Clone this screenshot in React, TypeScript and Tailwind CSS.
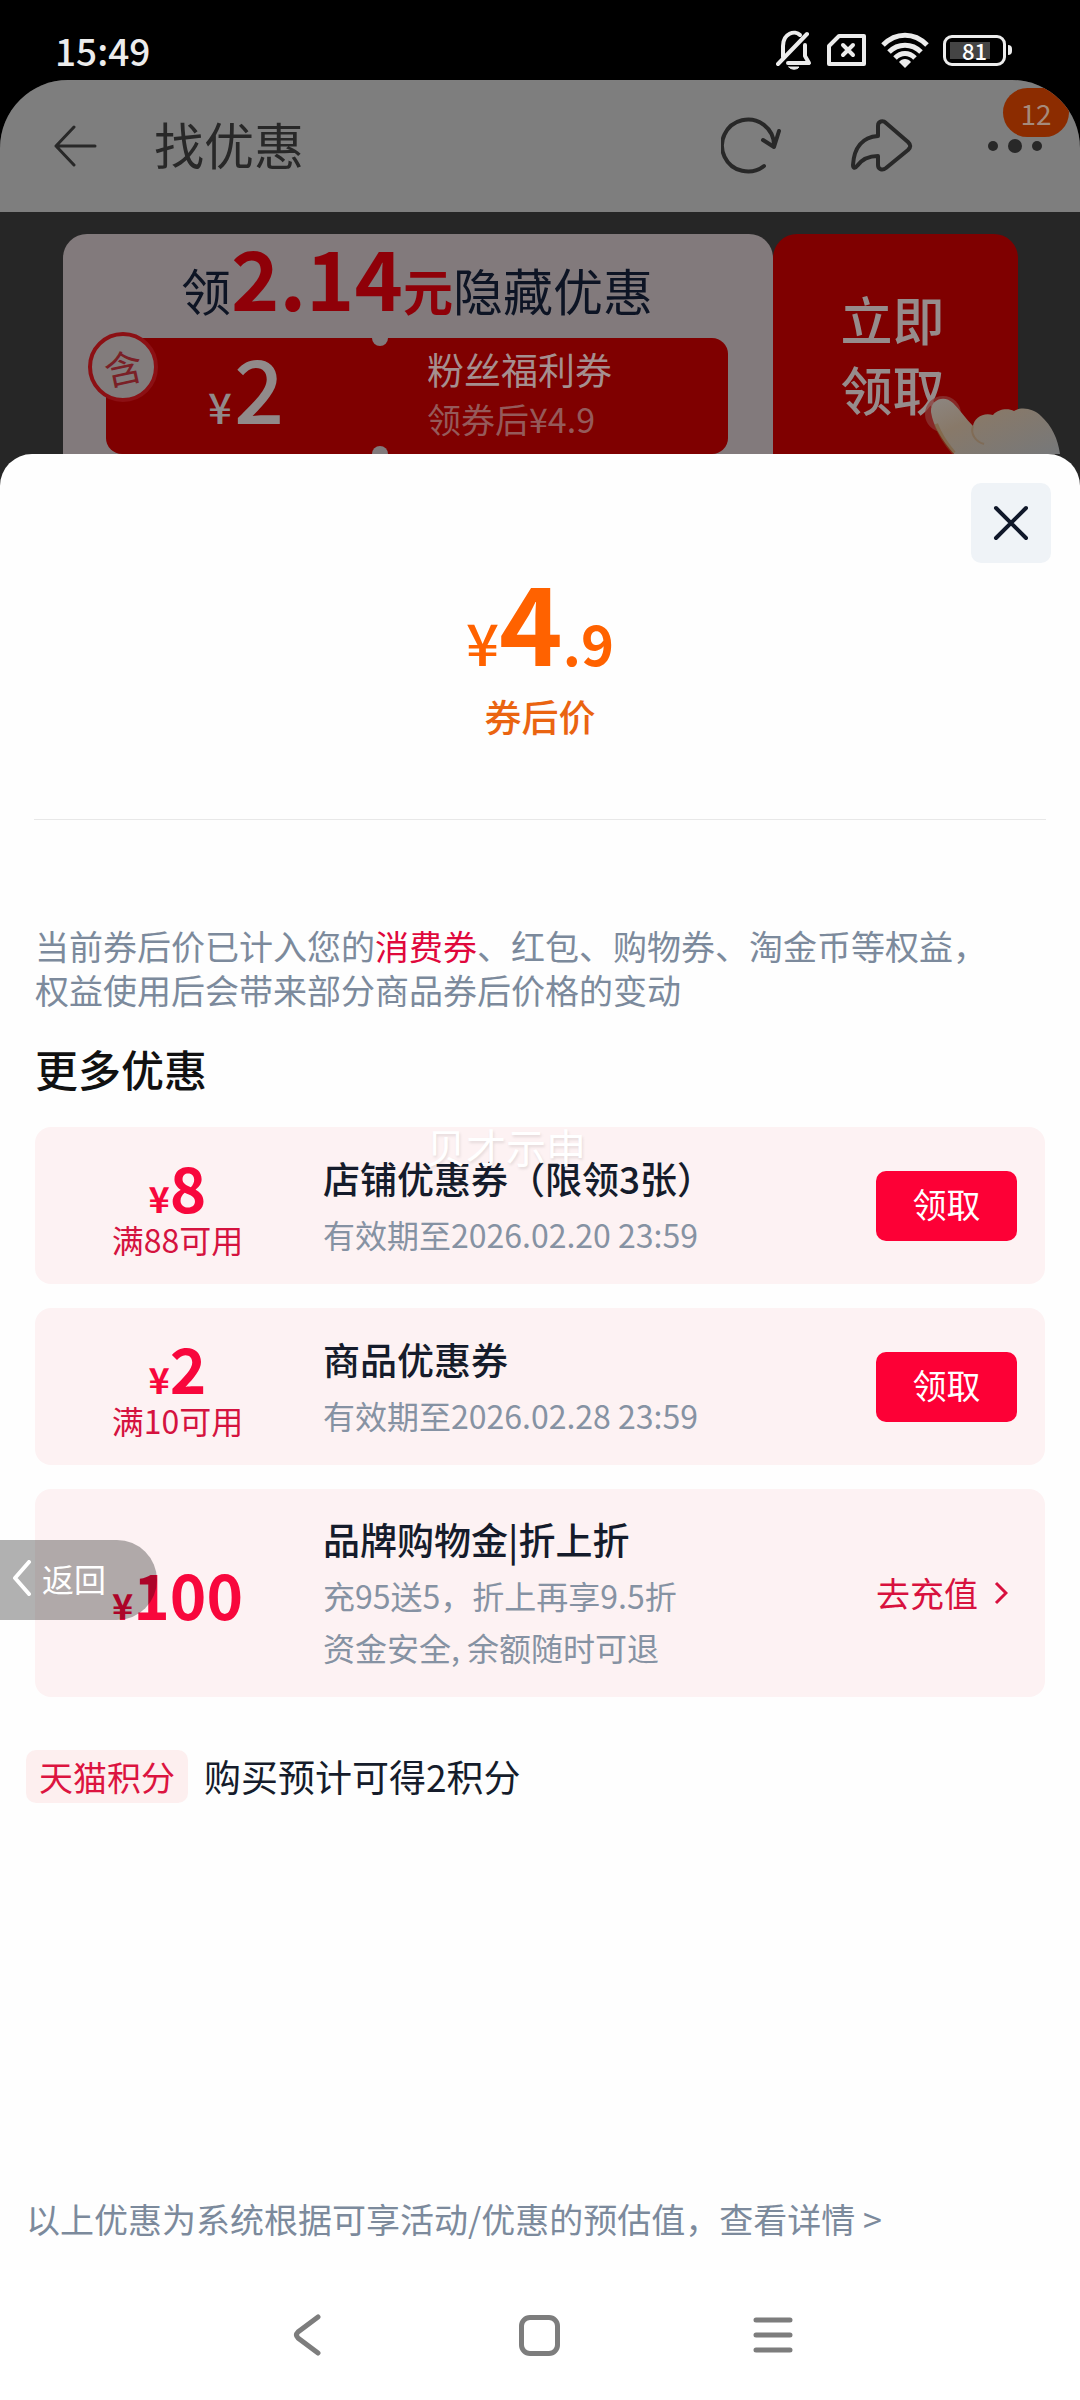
type Coupon = {
  amount: string;
  limit?: string;
  title: string;
  lines: string[];
  action: "claim" | "recharge";
};

const coupons: Coupon[] = [
  { amount: "8", limit: "满88可用", title: "店铺优惠券（限领3张）", lines: ["有效期至2026.02.20 23:59"], action: "claim" },
  { amount: "2", limit: "满10可用", title: "商品优惠券", lines: ["有效期至2026.02.28 23:59"], action: "claim" },
  { amount: "100", title: "品牌购物金|折上折", lines: ["充95送5，折上再享9.5折", "资金安全, 余额随时可退"], action: "recharge" },
];

function StatusBar() {
  return (
    <div className="flex h-20 items-end justify-between bg-black pr-[68px] pb-2 pl-[55px] text-[#ececec]">
      <span className="pb-0.5 text-[37px] leading-[40px] font-medium">15:49</span>
      <div className="flex h-11 items-center gap-[14px]">
        <svg width="36" height="40" viewBox="0 0 36 40" fill="none" stroke="currentColor" strokeWidth="4" strokeLinecap="round" strokeLinejoin="round">
          <path d="M2 34 L31 4" />
          <path d="M7 27 V16 C7 3 19 0 24 5" />
          <path d="M29 15 V26 L33 33 H12" />
          <path d="M13 37 H23 C21 40 15 40 13 37Z" fill="currentColor" strokeWidth="1" />
        </svg>
        <svg width="41" height="34" viewBox="0 0 41 34" fill="none" stroke="currentColor" strokeWidth="4" strokeLinecap="round" strokeLinejoin="round">
          <path d="M13 3 H38 V31 H3 V13 Z" />
          <path d="M17 12 L27 22 M27 12 L17 22" />
        </svg>
        <svg width="48" height="36" viewBox="0 0 48 36" fill="none" stroke="currentColor" strokeWidth="5">
          <path d="M2 13 C15 0 33 0 46 13" />
          <path d="M8 20 C17 11 31 11 40 20" />
          <path d="M14 26 C20 20 28 20 34 26" />
          <path d="M18 30 C21 26 27 26 30 30 L24 36Z" fill="currentColor" stroke="none" />
        </svg>
        <div className="flex items-center gap-0.5">
          <div className="relative flex h-[31px] w-[63px] items-center justify-center rounded-[9px] border-3 border-current">
            <span className="absolute top-1 left-1 h-[17px] w-10 bg-[#444]" />
            <span className="relative text-[22px] leading-[22px] font-medium text-white">81</span>
          </div>
          <span className="h-2.5 w-1 rounded-r-sm bg-current" />
        </div>
      </div>
    </div>
  );
}

function Header() {
  return (
    <header className="flex h-[132px] items-center bg-[#7e7e7e] pr-8 pl-[54px] text-[#282828]">
      <button type="button" aria-label="后退">
        <svg width="43" height="42" viewBox="0 0 43 42" fill="none" stroke="currentColor" strokeWidth="3" strokeLinecap="round" strokeLinejoin="round">
          <path d="M20 2 L2 21 L20 40 M2 21 H41" />
        </svg>
      </button>
      <h1 className="ml-[57px] pb-1.5 text-[50px] leading-[60px]">找优惠</h1>
      <div className="ml-auto flex items-center">
        <button type="button" aria-label="刷新">
          <svg width="62" height="58" viewBox="0 0 62 58" fill="none" stroke="currentColor" strokeWidth="4" strokeLinecap="round" strokeLinejoin="round">
            <path d="M43 49 A26 26 0 1 1 53 28" />
            <path d="M42 23 L53 30 L58 14" />
          </svg>
        </button>
        <button type="button" aria-label="分享" className="ml-[68px]">
          <svg width="62" height="54" viewBox="0 0 62 54" fill="none" stroke="currentColor" strokeWidth="4" strokeLinejoin="round">
            <path d="M27 17 V7 C27 2 32 1 35 4 L57 23 C60 26 60 28 57 31 L35 49 C31 52 27 50 27 46 V37 C17 37 11 40 6 47 C4 50 2 49 2 46 C3 29 11 18 27 17Z" />
          </svg>
        </button>
        <button type="button" aria-label="更多" className="relative ml-[69px]">
          <svg width="66" height="20" viewBox="0 0 66 20" fill="currentColor">
            <circle cx="11" cy="10" r="5" />
            <circle cx="33" cy="10" r="7" />
            <circle cx="55" cy="10" r="5" />
          </svg>
          <span className="absolute -top-[48px] left-[21px] flex h-[49px] w-[66px] items-center justify-center rounded-full bg-[#8c2c00] text-[28px] leading-[32px] text-[#a58a7c]">
            12
          </span>
        </button>
      </div>
    </header>
  );
}

function Hand() {
  return (
    <svg className="absolute right-[18px] bottom-0" width="138" height="62" viewBox="0 0 138 62">
      <defs>
        <linearGradient id="skin" x1="0" y1="0" x2="1" y2="1">
          <stop offset="0" stopColor="#8d8681" />
          <stop offset="0.35" stopColor="#887969" />
          <stop offset="1" stopColor="#76787a" />
        </linearGradient>
      </defs>
      <circle cx="19" cy="22" r="18" fill="#8a3a38" opacity="0.7" />
      <path
        d="M30 62 C18 48 9 34 7 20 C6 8 20 2 29 11 C36 18 42 27 49 34 C50 26 59 20 69 23 C74 17 84 16 90 19 C98 14 110 17 117 24 C128 34 134 47 136 62 Z"
        fill="url(#skin)"
      />
      <path d="M49 34 C46 42 52 50 60 52" fill="none" stroke="#7d6040" strokeWidth="2" opacity="0.5" />
      <path d="M12 32 C16 43 23 53 30 61" fill="none" stroke="#7d5a30" strokeWidth="4" opacity="0.5" />
    </svg>
  );
}

function Banner() {
  return (
    <section className="relative flex h-[242px] overflow-hidden pt-[22px] pr-[62px] pl-[63px]">
      <div className="flex-1 rounded-t-[24px] bg-[#827a7c] pr-[45px] pl-[43px]">
        <div className="flex h-[104px] items-baseline justify-center text-[50px] leading-none whitespace-nowrap text-[#0d1424]">
          <span>领</span>
          <span className="text-[82px] leading-[84px] font-bold text-[#8f0008]">2.14</span>
          <span className="font-bold text-[#8f0008]">元</span>
          <span>隐藏优惠</span>
        </div>
        <div className="relative flex h-[116px] rounded-2xl bg-[#7f0000]">
          <span className="absolute -top-2 left-[266px] size-4 rounded-full bg-[#827a7c]" />
          <span className="absolute -bottom-2 left-[266px] size-4 rounded-full bg-[#827a7c]" />
          <span className="absolute -top-[6px] -left-[18px] flex size-[70px] items-center justify-center rounded-full border-4 border-[#8c1014] bg-[#827c7c] text-[38px] leading-[40px] text-[#7a2026]">
            <span className="-rotate-12">含</span>
          </span>
          <div className="flex w-[280px] items-baseline justify-center gap-0.5 pt-1 leading-none text-[#918a8a]">
            <span className="text-[42px] font-medium">¥</span>
            <span className="text-[88px] font-medium">2</span>
          </div>
          <div className="pt-1.5 pl-[41px] leading-[50px] whitespace-nowrap">
            <p className="text-[37px] text-[#a58f8f]">粉丝福利券</p>
            <p className="text-[34px] text-[#955a5a]">领券后¥4.9</p>
          </div>
        </div>
      </div>
      <button type="button" className="flex w-[245px] flex-col items-center rounded-t-[24px] bg-[#7f0000] pt-[50px] pr-1.5 text-[52px] leading-[70px] font-medium text-[#968c8c]">
        <span>立即</span>
        <span>领取</span>
      </button>
      <Hand />
    </section>
  );
}

function CouponCard({ coupon }: { coupon: Coupon }) {
  return (
    <li className="flex min-h-[157px] items-center rounded-2xl bg-[#fdf2f3] py-6 pr-7">
      <div className="flex w-[285px] flex-col items-center text-[#d5133f]">
        <div className="flex items-baseline leading-none font-bold text-[#f8073c]">
          <span className="text-[36px]">¥</span>
          <span className="text-[62px] leading-[66px]">{coupon.amount}</span>
        </div>
        {coupon.limit && <p className="text-[32px] leading-[40px]">{coupon.limit}</p>}
      </div>
      <div className="flex-1 pl-[3px] text-[32px] leading-[52px] text-[#8692a3]">
        <h3 className="mb-1 text-[37px] font-medium text-[#151c2b]">{coupon.title}</h3>
        {coupon.lines.map((line) => (
          <p key={line}>{line}</p>
        ))}
      </div>
      {coupon.action === "claim" ? (
        <button type="button" className="h-[70px] w-[141px] rounded-[10px] bg-[#fd0036] pb-1 text-[34px] leading-[50px] text-white">
          领取
        </button>
      ) : (
        <a href="#recharge" className="flex w-[141px] items-center text-[34px] leading-[50px] text-[#d8113e]">
          去充值
          <svg className="ml-4" width="14" height="24" viewBox="0 0 14 24" fill="none" stroke="currentColor" strokeWidth="3">
            <path d="M2 2 L12 12 L2 22" />
          </svg>
        </a>
      )}
    </li>
  );
}

function NavBar() {
  return (
    <nav className="flex h-[130px] items-center bg-white px-[190px] text-[#7d7d7d]">
      <button type="button" aria-label="返回" className="flex flex-1 justify-center">
        <svg width="28" height="42" viewBox="0 0 28 42" fill="none" stroke="currentColor" strokeWidth="5" strokeLinecap="round">
          <path d="M25 3 L5 18 Q2 21 5 24 L25 39" />
        </svg>
      </button>
      <button type="button" aria-label="主页" className="flex flex-1 justify-center">
        <span className="size-[41px] rounded-[11px] border-5 border-current" />
      </button>
      <button type="button" aria-label="最近任务" className="flex flex-1 justify-center">
        <svg width="40" height="38" viewBox="0 0 40 38" stroke="currentColor" strokeWidth="5" strokeLinecap="round">
          <path d="M3 4 H37 M3 19 H37 M3 34 H37" />
        </svg>
      </button>
    </nav>
  );
}

export default function App() {
  return (
    <div className="relative flex min-h-screen flex-col bg-black font-['Noto_Sans_CJK_SC',sans-serif]">
      <StatusBar />
      <div className="flex flex-1 flex-col overflow-hidden rounded-t-[68px] bg-[#262626]">
        <Header />
        <Banner />
        <main className="flex flex-1 flex-col rounded-t-[32px] bg-[#fefefe]">
          <div className="flex justify-end pt-[29px] pr-[29px]">
            <button type="button" aria-label="关闭" className="flex size-20 items-center justify-center rounded-[10px] bg-[#eff3f7] text-[#10182a]">
              <svg width="36" height="36" viewBox="0 0 36 36" fill="none" stroke="currentColor" strokeWidth="4" strokeLinecap="round">
                <path d="M3 3 L33 33 M33 3 L3 33" />
              </svg>
            </button>
          </div>

          <div className="mt-0.5 flex items-baseline justify-center leading-none text-[#ff6200]">
            <span className="text-[58px] font-medium">¥</span>
            <span className="text-[108px] leading-[108px] font-bold">4</span>
            <span className="text-[56px] font-bold">.9</span>
          </div>
          <p className="mt-[18px] text-center text-[37px] leading-[50px] font-medium text-[#ea6411]">券后价</p>
          <hr className="mx-[34px] mt-[78px] border-[#e8e8e8]" />

          <p className="mx-[35px] mt-[104px] text-[34px] leading-[44px] text-[#7c8a9c]">
            当前券后价已计入您的<span className="text-[#e0083c]">消费券</span>、红包、购物券、淘金币等权益，
            <br />
            权益使用后会带来部分商品券后价格的变动
          </p>

          <h2 className="mx-[35px] mt-[26px] text-[43px] leading-[60px] font-medium text-[#111]">更多优惠</h2>
          <ul className="mx-[35px] mt-[29px] flex flex-col gap-6">
            {coupons.map((coupon) => (
              <CouponCard key={coupon.title} coupon={coupon} />
            ))}
          </ul>

          <div className="mt-[53px] flex items-center gap-4 pl-[26px]">
            <span className="rounded-[10px] bg-[#fdefef] px-[13px] text-[34px] leading-[53px] text-[#dc1440]">天猫积分</span>
            <span className="text-[37px] leading-[53px] text-[#151c2b]">购买预计可得2积分</span>
          </div>

          <p className="mt-auto px-[26px] pb-[26px] text-[34px] leading-[50px] text-[#7c8a9c]">
            以上优惠为系统根据可享活动/优惠的预估值，
            <a href="#detail">查看详情 &gt;</a>
          </p>
        </main>
        <NavBar />
      </div>

      <span className="pointer-events-none absolute top-[1120px] left-[426px] text-[40px] leading-[52px] text-white [text-shadow:1px_2px_3px_rgba(0,0,0,0.1)]">
        贝才示申
      </span>
      <button type="button" className="absolute top-[1540px] left-0 flex h-20 w-[157px] items-center gap-2.5 rounded-r-full bg-black/30 pb-1 pl-3 text-[32px] leading-[40px] text-white">
        <svg width="20" height="36" viewBox="0 0 20 36" fill="none" stroke="currentColor" strokeWidth="4" strokeLinecap="round" strokeLinejoin="round">
          <path d="M17 2 L3 18 L17 34" />
        </svg>
        返回
      </button>
    </div>
  );
}
